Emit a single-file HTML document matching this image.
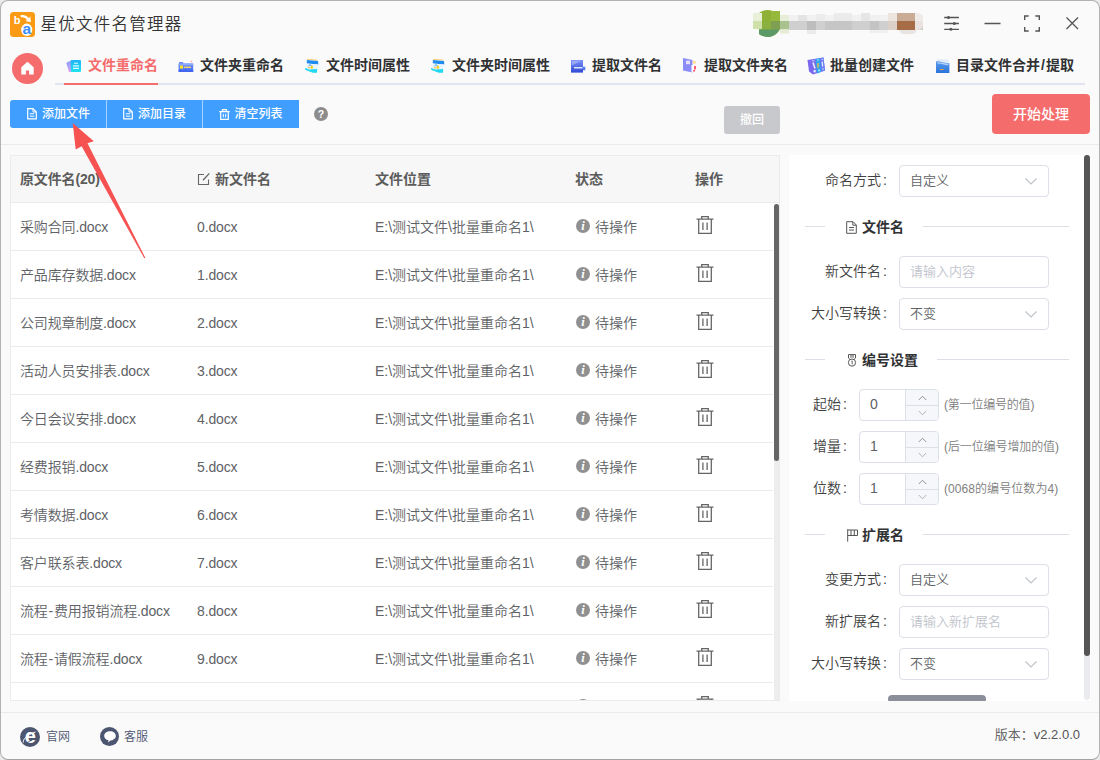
<!DOCTYPE html>
<html lang="zh-CN">
<head>
<meta charset="utf-8">
<title>星优文件名管理器</title>
<style>
*{box-sizing:border-box;margin:0;padding:0}
html,body{width:1100px;height:760px;overflow:hidden;background:#ebebeb}
body{font-family:"Liberation Sans","Noto Sans CJK SC",sans-serif;font-weight:350;font-size:14px;color:#606266;position:relative}
.abs{position:absolute}
#win{position:absolute;left:0;top:0;width:1100px;height:760px;background:#fafafa;border:1px solid #b2b2b2;border-bottom-color:#a2a2a2;border-radius:8px;overflow:hidden}
/* title */
#logo{left:9px;top:11px;width:25px;height:25px}
#title{left:39.500px;top:10px;font-size:16.500px;letter-spacing:1.250px;line-height:26px;color:#333;white-space:nowrap}
.wi{position:absolute;top:12px;width:20px;height:20px}
/* tabs */
#home{left:11px;top:52px;width:31px;height:31px;border-radius:50%;background:#f56c6c}
#tabline{left:54px;top:82px;width:1030px;height:2px;background:#e2e4f0}
#tabact{left:63px;top:82px;width:94px;height:2px;background:#f56c6c}
.tab{position:absolute;top:54px;height:20px;line-height:20px;font-size:14px;font-weight:bold;color:#303133;white-space:nowrap}
.tab.on{color:#f56c6c}
.ticon{position:absolute;top:56px;width:16px;height:16px}
/* toolbar */
#bgrp{left:9px;top:99px;width:289px;height:28px;border-radius:3px 0 0 3px;background:#409eff;overflow:hidden}
.bt{position:absolute;top:0;height:28px;line-height:28px;color:#fff;font-size:12px;font-weight:500;white-space:nowrap}
.bsep{position:absolute;top:0;width:1px;height:28px;background:rgba(255,255,255,.55)}
#undo{left:723px;top:105px;width:56px;height:28px;border-radius:3px;background:#c8c9cc;color:#fff;font-size:12px;font-weight:500;line-height:28px;text-align:center}
#start{left:991px;top:93px;width:98px;height:40px;border-radius:4px;background:#f56c6c;color:#fff;font-size:14px;font-weight:500;line-height:40px;text-align:center}
#hline1{left:0;top:143px;width:1098px;height:1px;background:#ebebeb}
/* table */
#tbl{left:9px;top:154px;width:770px;height:546px;background:#fff;border:1px solid #ebebeb;overflow:hidden}
#thead{left:0;top:0;width:768px;height:47px;background:#f7f7f7;border-bottom:1px solid #ebebeb}
.th{position:absolute;top:13px;line-height:20px;font-weight:bold;color:#5c5c5c;font-size:14px;white-space:nowrap}
.row{position:absolute;left:0;width:762px;height:48px;border-bottom:1px solid #ebebeb}
.td{position:absolute;top:14px;line-height:20px;font-size:14px;color:#606266;white-space:nowrap;font-weight:350}
.c1,.c2{letter-spacing:-.15px}
.c1{left:9px}.c2{left:186px}.c3{left:364px}.c4{left:564px}.c5{left:684px}
.info{position:absolute;left:565px;top:16.300px;width:14px;height:14px}
.st{left:584px}
.trash{position:absolute;left:685px;top:12px;width:18px;height:20px}
#tsbtrack{left:763px;top:48px;width:5px;height:498px;background:#ededed}
#tsb{left:763px;top:48px;width:5px;height:257px;background:#666;border-radius:3px}
/* right panel */
#rp{left:788px;top:154px;width:302px;height:546px;background:#fff;overflow:hidden}
.lb{position:absolute;width:100px;text-align:right;line-height:20px;font-size:14px;color:#404040;white-space:nowrap}
.lb i{font-style:normal;margin-left:2px}
.sel,.inp{position:absolute;height:32px;border:1px solid #dcdfe6;border-radius:4px;background:#fff;line-height:30px;font-size:13px;padding-left:10px;color:#606266;white-space:nowrap}
.inp{color:#c0c4cc}
.chev{position:absolute;right:10px;top:9px;width:14px;height:12px}
.dv{position:absolute;left:16px;width:264px;height:1px;background:#dcdfe6}
.dvt{position:absolute;top:-9px;height:20px;line-height:20px;background:#fff;font-weight:bold;color:#303133;font-size:14px;white-space:nowrap}
.num{position:absolute;left:70px;width:80px;height:32px;border:1px solid #dcdfe6;border-radius:4px;background:#fff;overflow:hidden}
.num .v{position:absolute;left:10px;top:0;line-height:29px;font-size:14px;color:#606266}
.num .sp{position:absolute;right:0;top:0;width:33px;height:30px;background:#f5f7fa;border-left:1px solid #dcdfe6}
.num .sp i{position:absolute;left:0;top:15px;width:32px;height:1px;background:#dcdfe6}
.hint{position:absolute;left:155px;line-height:20px;font-size:12px;color:#808080;white-space:nowrap;letter-spacing:-.2px}
#rsb{left:295px;top:0;width:6px;height:501px;background:#555;border-radius:3px}
#rsbtrack{left:295px;top:0;width:6px;height:545px;background:#e9ebee;border-radius:3px}
#hsb{left:99px;top:540px;width:98px;height:8px;background:#8b8f99;border-radius:4px}
/* footer */
#hline2{left:0;top:711px;width:1098px;height:1px;background:#ebebeb}
.ft{position:absolute;top:725.500px;line-height:20px;font-size:12px;color:#4d5670;white-space:nowrap}
.fic{overflow:hidden;position:absolute;top:725.500px;width:20px;height:20px;border-radius:50%;background:#4d5670}
#ver{right:19px;top:724px;line-height:20px;font-size:13px;color:#555;white-space:nowrap}
</style>
</head>
<body>
<div id="win">
<svg id="logo" class="abs" viewBox="0 0 25 25"><rect width="25" height="25" rx="3.500" fill="#fb9a14"/><path d="M10.400 3.300c3.600-.9 7 .5 8.600 3.200l1.300-2.500.6 6.300-5.600-1.300 1.800-1.100c-1.400-2-3.800-3-6.200-2.700z" fill="#fff"/><ellipse cx="16.700" cy="17.800" rx="5.600" ry="6.200" fill="#fff"/><text x="3.800" y="11.700" font-family="Liberation Sans, sans-serif" font-weight="bold" font-size="11" fill="#fff">b</text><text x="12.400" y="22.200" font-family="Liberation Sans, sans-serif" font-weight="bold" font-size="15.500" fill="#3b8ef5">a</text></svg>
<div id="title" class="abs">星优文件名管理器</div>
<div id="mosaic" class="abs" style="left:750px;top:11px;width:170px;height:24px">
<svg width="170" height="24" viewBox="0 0 170 24" style="overflow:visible">
<clipPath id="cpg"><rect x="8" y="-3" width="21" height="30"/></clipPath>
<g clip-path="url(#cpg)"><circle cx="16.500" cy="11.500" r="13.500" fill="#8fb236"/><rect x="20" y="-1" width="9" height="10" fill="#96b83c"/><rect x="11" y="9" width="9" height="9" fill="#8ab040"/><rect x="20" y="9" width="9" height="8.500" fill="#7f9f52"/><path d="M4 17.500h25v9H4z" fill="#5b9a66" clip-path="url(#cpc)"/></g>
<clipPath id="cpc"><circle cx="16.500" cy="11.500" r="13.500"/></clipPath>
<rect x="2" y="1" width="9" height="8" fill="#e8f0d8"/><rect x="2" y="9" width="9" height="8" fill="#cfe0a8"/>
<rect x="29" y="3" width="9" height="6" fill="#e6eed8"/><rect x="29" y="9" width="9" height="8.500" fill="#a9c18c"/><rect x="29" y="17.500" width="9" height="4" fill="#e4ecd4"/>
<g transform="translate(2 0)"><rect x="36" y="9" width="134" height="9" fill="#cfcfcf"/>
<rect x="36" y="3" width="100" height="6" fill="#f1f1f1"/>
<rect x="45" y="3" width="9" height="6" fill="#e4e4e4"/><rect x="63" y="2" width="9" height="7" fill="#ececec"/><rect x="81" y="1" width="18" height="8" fill="#ebebeb"/><rect x="108" y="1" width="9" height="8" fill="#e6e6e6"/>
<rect x="54" y="9" width="9" height="9" fill="#bdbdbd"/><rect x="72" y="9" width="27" height="9" fill="#c6c6c6"/><rect x="117" y="9" width="9" height="9" fill="#c4c4c4"/>
<rect x="54" y="18" width="9" height="4" fill="#ebebeb"/><rect x="117" y="18" width="18" height="3" fill="#f0f0f0"/>
<rect x="135" y="1" width="9" height="8" fill="#ece4de"/><rect x="135" y="9" width="9" height="9" fill="#dccfc6"/>
<rect x="144" y="1" width="18" height="8" fill="#c9ab96"/><rect x="144" y="9" width="18" height="9" fill="#a66c46"/>
<path d="M162 1h3a5 5 0 0 1 5 5v3h-8z" fill="#f0ebe8"/><path d="M162 9h8v4a5 5 0 0 1-5 5h-3z" fill="#e9e2de"/>
<path d="M146 18h18a6 6 0 0 1-6 4h-8a6 6 0 0 1-4-4z" fill="#e8e4e2"/>
</g></svg></div>
<svg class="wi" style="left:940px" viewBox="0 0 20 20" fill="none" stroke="#555" stroke-width="1.300"><path d="M3.200 4.500h14.700M3.200 10.500h14.700M3.200 16.300h14.700"/><g fill="#555" stroke="none"><circle cx="7.500" cy="4.500" r="1.500"/><circle cx="13.300" cy="10.500" r="1.500"/><circle cx="9.900" cy="16.300" r="1.500"/></g></svg>
<svg class="wi" style="left:981px" viewBox="0 0 20 20" fill="none" stroke="#555" stroke-width="1.300"><path d="M2.500 10.500h16"/></svg>
<svg class="wi" style="left:1021px" viewBox="0 0 20 20" fill="none" stroke="#555" stroke-width="1.400"><path d="M2.700 7V3h4M13.300 3h4v4M17.300 14v4h-4M6.700 18h-4v-4"/></svg>
<svg class="wi" style="left:1061px" viewBox="0 0 20 20" fill="none" stroke="#555" stroke-width="1.300"><path d="M4.500 4.500l11.500 11.500M16 4.500L4.500 16"/></svg>

<div id="home" class="abs"><svg width="31" height="31" viewBox="-0.5 -0.5 31 31"><path d="M15 8.300l-6.200 5.500v7.200h4.600v-4h3.200v4h4.600v-7.200z" fill="#fff"/></svg></div>
<div id="tabline" class="abs"></div><div id="tabact" class="abs"></div>
<svg class="abs" style="left:-1px;top:-1px" width="1100" height="90" viewBox="0 0 1100 90">
<defs><linearGradient id="g1" x1="0" y1="0" x2="0" y2="1"><stop offset="0" stop-color="#85a2f8"/><stop offset="1" stop-color="#dca0f5"/></linearGradient>
<linearGradient id="g2" x1="0" y1="0" x2="0" y2="1"><stop offset="0" stop-color="#1fb4f5"/><stop offset="1" stop-color="#20e4f0"/></linearGradient>
<linearGradient id="g5" x1="0" y1="0" x2="0" y2="1"><stop offset="0" stop-color="#7c93f8"/><stop offset="1" stop-color="#3048d4"/></linearGradient>
<linearGradient id="g8" x1="0" y1="0" x2="0" y2="1"><stop offset="0" stop-color="#5a9cf0"/><stop offset="1" stop-color="#2a74d8"/></linearGradient></defs>
<path d="M66.200 62.800l4.800-2.300v11.500h-2z" fill="url(#g1)"/><rect x="70.800" y="60" width="10.200" height="12" rx="1" fill="url(#g2)"/><path d="M74 63.300h4M73 65.900h6M73 68.400h6" stroke="#dffaff" stroke-width="1.100"/>
<rect x="179" y="62" width="4.200" height="3" fill="#6f8cff"/><rect x="178.600" y="63.500" width="14.600" height="8.500" rx=".6" fill="#5a7cf8"/><rect x="178.600" y="63.500" width="14.600" height="2" fill="#8fa8ff"/><rect x="178.600" y="69.600" width="14.600" height="2.400" fill="#4166ee"/><rect x="180" y="65.600" width="3" height="3" fill="#ffe81a"/><rect x="184" y="66.600" width="7" height="1.300" fill="#ffe060"/><circle cx="191.500" cy="61.500" r=".8" fill="#ffa090"/>
<g transform="translate(0 0)"><path d="M307 59.300l10.500.8" stroke="#ffc86a" stroke-width=".9"/><path d="M306.800 60l11.200 1 .3 3.600-11.500-1.100z" fill="#1f8df0"/><path d="M306.600 63.400l11.200 1v4.800h-11.200z" fill="#eaf4ff"/><path d="M308.500 65.800c1-1.300 2.600-1 3 .2" stroke="#2f9cf0" stroke-width="1" fill="none"/><ellipse cx="311.800" cy="67.300" rx="1.200" ry="1.700" fill="#f2cf1e"/><rect x="308" y="67" width="2" height="1.200" fill="#f5c24a"/><path d="M304.800 67.800l4.400 1.700 8-.5-.2 3.800h-4.200l-7.300-2.800z" fill="#22d8f0"/></g><g transform="translate(126 0)"><path d="M307 59.300l10.500.8" stroke="#ffc86a" stroke-width=".9"/><path d="M306.800 60l11.200 1 .3 3.600-11.500-1.100z" fill="#1f8df0"/><path d="M306.600 63.400l11.200 1v4.800h-11.200z" fill="#eaf4ff"/><path d="M308.500 65.800c1-1.300 2.600-1 3 .2" stroke="#2f9cf0" stroke-width="1" fill="none"/><ellipse cx="311.800" cy="67.300" rx="1.200" ry="1.700" fill="#f2cf1e"/><rect x="308" y="67" width="2" height="1.200" fill="#f5c24a"/><path d="M304.800 67.800l4.400 1.700 8-.5-.2 3.800h-4.200l-7.300-2.800z" fill="#22d8f0"/></g>
<rect x="571" y="60" width="12" height="12.600" fill="url(#g5)"/><path d="M571.800 60.800h9.500l-9.500 4.800z" fill="#a4b0fb" opacity=".8"/><rect x="583" y="66.700" width="2.300" height="3.600" fill="#5a78f0"/><rect x="574" y="67" width="8.500" height="1.500" fill="#dbe4ff"/>
<path d="M683 58l9.500 2v12.500l-9.500-2z" fill="#8c8cf8"/><rect x="686" y="60.600" width="4" height="3.600" fill="#e2e2ff"/><rect x="691.500" y="65" width="2.800" height="7.300" fill="#fff"/><ellipse cx="694.300" cy="62.300" rx="1.800" ry="1.500" fill="#ffdc9a"/><rect x="694" y="66" width="2" height="3.500" fill="#ff5f6e"/><rect x="693" y="70" width="2" height="1.600" fill="#ff5f6e"/>
<path d="M807.500 60l16-2.500 1.500 13-12 4-4-3z" fill="#7b68ee"/><path d="M815.500 59l4.500-.8 1 13.800-4 1.500z" fill="#2fa8f0"/><path d="M820.500 58l3-.5 1.500 13-3.500 1.300z" fill="#6f7ef5"/><path d="M813 62.500l2 6" stroke="#e8f4ff" stroke-width="1.500"/><path d="M818 63v4.800" stroke="#f5c030" stroke-width="1.300"/><path d="M822.200 61.500l.4 5" stroke="#e0ecff" stroke-width="1.200"/><rect x="813.500" y="70" width="2.300" height="2.300" fill="#d0f0ff"/><rect x="818.200" y="69.500" width="1.800" height="1.800" fill="#a8dcff"/><rect x="822.300" y="68" width="1.600" height="1.800" fill="#98c4ff"/><path d="M812 60.800h2.500M817 60h2M821.500 59.300h1.800" stroke="#c8f0ff" stroke-width=".8"/>
<path d="M937.500 59l11 .5.500 7h-12z" fill="#e3ebf9"/><path d="M936 61.500c4-1.200 9 2.500 13.400 1.500v10h-13.400z" fill="url(#g8)"/><path d="M937.500 63c3.500-.8 7 1.800 10.800 1.500" stroke="#cfe0f8" stroke-width="1.300" fill="none" opacity=".8"/><rect x="940" y="69" width="3.700" height="1" fill="#e0a040"/>
</svg>
<div class="tab on" style="left:87px">文件重命名</div>
<div class="tab" style="left:199px">文件夹重命名</div>
<div class="tab" style="left:325px">文件时间属性</div>
<div class="tab" style="left:451px">文件夹时间属性</div>
<div class="tab" style="left:591px">提取文件名</div>
<div class="tab" style="left:703px">提取文件夹名</div>
<div class="tab" style="left:829px">批量创建文件</div>
<div class="tab" style="left:955px">目录文件合并<span style="margin:0 1px">/</span>提取</div>

<div id="bgrp" class="abs">
<svg class="abs" style="left:17px;top:8px" width="10" height="12" viewBox="0 0 10 12" fill="none" stroke="#fff" stroke-width="1.200"><path d="M.7.700h5.300l3.300 3.300v6.800H.7z"/><path d="M6 .7v3.300h3.300M2.800 5.800h4.400M2.800 8.200h4.400" stroke-width="1"/></svg>
<div class="bt" style="left:32px">添加文件</div><div class="bsep" style="left:96px"></div>
<svg class="abs" style="left:113px;top:8px" width="10" height="12" viewBox="0 0 10 12" fill="none" stroke="#fff" stroke-width="1.200"><path d="M.7.700h5.300l3.300 3.300v6.800H.7z"/><path d="M6 .7v3.300h3.300M2.800 5.800h4.400M2.800 8.200h4.400" stroke-width="1"/></svg>
<div class="bt" style="left:128px">添加目录</div><div class="bsep" style="left:192px"></div>
<svg class="abs" style="left:208.500px;top:8.500px" width="11" height="11" viewBox="0 0 11 11" fill="none" stroke="#fff" stroke-width="1.200"><path d="M.3 2.600h10.400M3.500 2.400V.7h4v1.700M1.700 2.800v7.500h7.600V2.800"/><path d="M4.300 4.800v3.600M6.700 4.800v3.600" stroke-width="1"/></svg>
<div class="bt" style="left:224.500px">清空列表</div>
</div>
<svg class="abs" style="left:313px;top:106px" width="14" height="14" viewBox="0 0 14 14"><circle cx="7" cy="7" r="7" fill="#8c8c8c"/><text x="7" y="10.800" text-anchor="middle" font-family="Liberation Sans, sans-serif" font-weight="bold" font-size="10.500" fill="#fff">?</text></svg>
<div id="undo" class="abs">撤回</div>
<div id="start" class="abs">开始处理</div>
<div id="hline1" class="abs"></div>

<div id="tbl" class="abs">
<div id="thead" class="abs">
<div class="th c1">原文件名(20)</div>
<svg class="abs" style="left:186px;top:16px" width="14" height="14" viewBox="0 0 14 14" fill="none" stroke="#666" stroke-width="1.100"><path d="M11.500 7.500v5h-10v-10h5.500"/><path d="M6 8.200l6.300-6.800" stroke-width="1.300"/></svg>
<div class="th" style="left:204px">新文件名</div>
<div class="th c3">文件位置</div>
<div class="th c4">状态</div>
<div class="th c5">操作</div>
</div>
<div class="row" style="top:47px"><div class="td c1">采购合同.docx</div><div class="td c2">0.docx</div><div class="td c3">E:\测试文件\批量重命名1\</div><svg class="info" viewBox="0 0 14 14"><circle cx="7" cy="7" r="7" fill="#909090"/><text x="7" y="11" text-anchor="middle" font-family="Liberation Serif, serif" font-style="italic" font-weight="bold" font-size="12.500" fill="#fff">i</text></svg><div class="td st">待操作</div><svg class="trash" viewBox="0 0 18 20" fill="none" stroke="#666" stroke-width="1.300"><path d="M.5 4.200h17M5.700 4V1.700h6.600V4M2.700 4.500v13.800h12.600V4.500"/><path d="M6.900 7.500v7.500M11.100 7.500v7.500"/></svg></div>
<div class="row" style="top:95px"><div class="td c1">产品库存数据.docx</div><div class="td c2">1.docx</div><div class="td c3">E:\测试文件\批量重命名1\</div><svg class="info" viewBox="0 0 14 14"><circle cx="7" cy="7" r="7" fill="#909090"/><text x="7" y="11" text-anchor="middle" font-family="Liberation Serif, serif" font-style="italic" font-weight="bold" font-size="12.500" fill="#fff">i</text></svg><div class="td st">待操作</div><svg class="trash" viewBox="0 0 18 20" fill="none" stroke="#666" stroke-width="1.300"><path d="M.5 4.200h17M5.700 4V1.700h6.600V4M2.700 4.500v13.800h12.600V4.500"/><path d="M6.900 7.500v7.500M11.100 7.500v7.500"/></svg></div>
<div class="row" style="top:143px"><div class="td c1">公司规章制度.docx</div><div class="td c2">2.docx</div><div class="td c3">E:\测试文件\批量重命名1\</div><svg class="info" viewBox="0 0 14 14"><circle cx="7" cy="7" r="7" fill="#909090"/><text x="7" y="11" text-anchor="middle" font-family="Liberation Serif, serif" font-style="italic" font-weight="bold" font-size="12.500" fill="#fff">i</text></svg><div class="td st">待操作</div><svg class="trash" viewBox="0 0 18 20" fill="none" stroke="#666" stroke-width="1.300"><path d="M.5 4.200h17M5.700 4V1.700h6.600V4M2.700 4.500v13.800h12.600V4.500"/><path d="M6.900 7.500v7.500M11.100 7.500v7.500"/></svg></div>
<div class="row" style="top:191px"><div class="td c1">活动人员安排表.docx</div><div class="td c2">3.docx</div><div class="td c3">E:\测试文件\批量重命名1\</div><svg class="info" viewBox="0 0 14 14"><circle cx="7" cy="7" r="7" fill="#909090"/><text x="7" y="11" text-anchor="middle" font-family="Liberation Serif, serif" font-style="italic" font-weight="bold" font-size="12.500" fill="#fff">i</text></svg><div class="td st">待操作</div><svg class="trash" viewBox="0 0 18 20" fill="none" stroke="#666" stroke-width="1.300"><path d="M.5 4.200h17M5.700 4V1.700h6.600V4M2.700 4.500v13.800h12.600V4.500"/><path d="M6.900 7.500v7.500M11.100 7.500v7.500"/></svg></div>
<div class="row" style="top:239px"><div class="td c1">今日会议安排.docx</div><div class="td c2">4.docx</div><div class="td c3">E:\测试文件\批量重命名1\</div><svg class="info" viewBox="0 0 14 14"><circle cx="7" cy="7" r="7" fill="#909090"/><text x="7" y="11" text-anchor="middle" font-family="Liberation Serif, serif" font-style="italic" font-weight="bold" font-size="12.500" fill="#fff">i</text></svg><div class="td st">待操作</div><svg class="trash" viewBox="0 0 18 20" fill="none" stroke="#666" stroke-width="1.300"><path d="M.5 4.200h17M5.700 4V1.700h6.600V4M2.700 4.500v13.800h12.600V4.500"/><path d="M6.900 7.500v7.500M11.100 7.500v7.500"/></svg></div>
<div class="row" style="top:287px"><div class="td c1">经费报销.docx</div><div class="td c2">5.docx</div><div class="td c3">E:\测试文件\批量重命名1\</div><svg class="info" viewBox="0 0 14 14"><circle cx="7" cy="7" r="7" fill="#909090"/><text x="7" y="11" text-anchor="middle" font-family="Liberation Serif, serif" font-style="italic" font-weight="bold" font-size="12.500" fill="#fff">i</text></svg><div class="td st">待操作</div><svg class="trash" viewBox="0 0 18 20" fill="none" stroke="#666" stroke-width="1.300"><path d="M.5 4.200h17M5.700 4V1.700h6.600V4M2.700 4.500v13.800h12.600V4.500"/><path d="M6.900 7.500v7.500M11.100 7.500v7.500"/></svg></div>
<div class="row" style="top:335px"><div class="td c1">考情数据.docx</div><div class="td c2">6.docx</div><div class="td c3">E:\测试文件\批量重命名1\</div><svg class="info" viewBox="0 0 14 14"><circle cx="7" cy="7" r="7" fill="#909090"/><text x="7" y="11" text-anchor="middle" font-family="Liberation Serif, serif" font-style="italic" font-weight="bold" font-size="12.500" fill="#fff">i</text></svg><div class="td st">待操作</div><svg class="trash" viewBox="0 0 18 20" fill="none" stroke="#666" stroke-width="1.300"><path d="M.5 4.200h17M5.700 4V1.700h6.600V4M2.700 4.500v13.800h12.600V4.500"/><path d="M6.900 7.500v7.500M11.100 7.500v7.500"/></svg></div>
<div class="row" style="top:383px"><div class="td c1">客户联系表.docx</div><div class="td c2">7.docx</div><div class="td c3">E:\测试文件\批量重命名1\</div><svg class="info" viewBox="0 0 14 14"><circle cx="7" cy="7" r="7" fill="#909090"/><text x="7" y="11" text-anchor="middle" font-family="Liberation Serif, serif" font-style="italic" font-weight="bold" font-size="12.500" fill="#fff">i</text></svg><div class="td st">待操作</div><svg class="trash" viewBox="0 0 18 20" fill="none" stroke="#666" stroke-width="1.300"><path d="M.5 4.200h17M5.700 4V1.700h6.600V4M2.700 4.500v13.800h12.600V4.500"/><path d="M6.900 7.500v7.500M11.100 7.500v7.500"/></svg></div>
<div class="row" style="top:431px"><div class="td c1">流程<span style="margin:0 .9px">-</span>费用报销流程.docx</div><div class="td c2">8.docx</div><div class="td c3">E:\测试文件\批量重命名1\</div><svg class="info" viewBox="0 0 14 14"><circle cx="7" cy="7" r="7" fill="#909090"/><text x="7" y="11" text-anchor="middle" font-family="Liberation Serif, serif" font-style="italic" font-weight="bold" font-size="12.500" fill="#fff">i</text></svg><div class="td st">待操作</div><svg class="trash" viewBox="0 0 18 20" fill="none" stroke="#666" stroke-width="1.300"><path d="M.5 4.200h17M5.700 4V1.700h6.600V4M2.700 4.500v13.800h12.600V4.500"/><path d="M6.900 7.500v7.500M11.100 7.500v7.500"/></svg></div>
<div class="row" style="top:479px"><div class="td c1">流程<span style="margin:0 .9px">-</span>请假流程.docx</div><div class="td c2">9.docx</div><div class="td c3">E:\测试文件\批量重命名1\</div><svg class="info" viewBox="0 0 14 14"><circle cx="7" cy="7" r="7" fill="#909090"/><text x="7" y="11" text-anchor="middle" font-family="Liberation Serif, serif" font-style="italic" font-weight="bold" font-size="12.500" fill="#fff">i</text></svg><div class="td st">待操作</div><svg class="trash" viewBox="0 0 18 20" fill="none" stroke="#666" stroke-width="1.300"><path d="M.5 4.200h17M5.700 4V1.700h6.600V4M2.700 4.500v13.800h12.600V4.500"/><path d="M6.900 7.500v7.500M11.100 7.500v7.500"/></svg></div>
<div class="row" style="top:527px"><div class="td c1">流程<span style="margin:0 .9px">-</span>入职流程.docx</div><div class="td c2">10.docx</div><div class="td c3">E:\测试文件\批量重命名1\</div><svg class="info" viewBox="0 0 14 14"><circle cx="7" cy="7" r="7" fill="#909090"/><text x="7" y="11" text-anchor="middle" font-family="Liberation Serif, serif" font-style="italic" font-weight="bold" font-size="12.500" fill="#fff">i</text></svg><div class="td st">待操作</div><svg class="trash" viewBox="0 0 18 20" fill="none" stroke="#666" stroke-width="1.300"><path d="M.5 4.200h17M5.700 4V1.700h6.600V4M2.700 4.500v13.800h12.600V4.500"/><path d="M6.900 7.500v7.500M11.100 7.500v7.500"/></svg></div>
<div id="tsbtrack" class="abs"></div><div id="tsb" class="abs"></div>
</div>
<div id="rp" class="abs">
<div class="lb" style="left:0;top:15px;width:98px">命名方式<i>:</i></div><div class="sel" style="left:110px;top:10px;width:150px">自定义<svg class="chev" viewBox="0 0 14 12" fill="none" stroke="#bfc3ca" stroke-width="1.200"><path d="M1.500 3.500l5.500 5.500 5.500-5.500"/></svg></div>
<div class="dv" style="top:71px"><div class="dvt" style="left:20px;width:98px;padding-left:37px"><svg class="abs" style="left:21px;top:4px" width="11" height="13" viewBox="0 0 11 13" fill="none" stroke="#555" stroke-width="1"><path d="M.7.700h6.300l3.300 3.300v8.300H.7z"/><path d="M6.800.800v3.400h3.400M3 6.500h5M3 9h5"/></svg>文件名</div></div>
<div class="lb" style="left:0;top:106px;width:98px">新文件名<i>:</i></div><div class="inp" style="left:110px;top:101px;width:150px">请输入内容</div>
<div class="lb" style="left:0;top:148px;width:98px">大小写转换<i>:</i></div><div class="sel" style="left:110px;top:143px;width:150px">不变<svg class="chev" viewBox="0 0 14 12" fill="none" stroke="#bfc3ca" stroke-width="1.200"><path d="M1.500 3.500l5.500 5.500 5.500-5.500"/></svg></div>
<div class="dv" style="top:204px"><div class="dvt" style="left:20px;width:112px;padding-left:37px"><svg class="abs" style="left:22px;top:4px" width="10" height="13" viewBox="0 0 10 13" fill="none" stroke="#555" stroke-width="1"><path d="M1.500.600h7v3.500l-1.500 1.300M1.500.600v3.500l1.500 1.300M4 .8v3M6 .8v3"/><circle cx="5" cy="8.600" r="3.600"/><path d="M4.500 7.300l.7-.4v3.500" stroke-width=".9"/></svg>编号设置</div></div>
<div class="lb" style="left:1px;top:239px;width:57px">起始<i>:</i></div><div class="num" style="top:234px"><span class="v">0</span><div class="sp"><i></i><svg class="abs" style="left:12px;top:5px" width="9" height="6" viewBox="0 0 9 6" fill="none" stroke="#909399" stroke-width="1"><path d="M.8 5l3.700-3.800 3.700 3.800"/></svg><svg class="abs" style="left:12px;top:20px" width="9" height="6" viewBox="0 0 9 6" fill="none" stroke="#b0b3b9" stroke-width="1"><path d="M.8 1l3.700 3.800 3.700-3.800"/></svg></div></div><div class="hint" style="top:240px">(第一位编号的值)</div>
<div class="lb" style="left:1px;top:281px;width:57px">增量<i>:</i></div><div class="num" style="top:276px"><span class="v">1</span><div class="sp"><i></i><svg class="abs" style="left:12px;top:5px" width="9" height="6" viewBox="0 0 9 6" fill="none" stroke="#909399" stroke-width="1"><path d="M.8 5l3.700-3.800 3.700 3.800"/></svg><svg class="abs" style="left:12px;top:20px" width="9" height="6" viewBox="0 0 9 6" fill="none" stroke="#b0b3b9" stroke-width="1"><path d="M.8 1l3.700 3.800 3.700-3.800"/></svg></div></div><div class="hint" style="top:282px;letter-spacing:-.1px">(后一位编号增加的值)</div>
<div class="lb" style="left:1px;top:323px;width:57px">位数<i>:</i></div><div class="num" style="top:318px"><span class="v">1</span><div class="sp"><i></i><svg class="abs" style="left:12px;top:5px" width="9" height="6" viewBox="0 0 9 6" fill="none" stroke="#909399" stroke-width="1"><path d="M.8 5l3.700-3.800 3.700 3.800"/></svg><svg class="abs" style="left:12px;top:20px" width="9" height="6" viewBox="0 0 9 6" fill="none" stroke="#b0b3b9" stroke-width="1"><path d="M.8 1l3.700 3.800 3.700-3.800"/></svg></div></div><div class="hint" style="top:324px;letter-spacing:.07px">(0068的编号位数为4)</div>
<div class="dv" style="top:379px"><div class="dvt" style="left:20px;width:98px;padding-left:37px"><svg class="abs" style="left:22px;top:4px" width="11" height="13" viewBox="0 0 11 13" fill="none" stroke="#555" stroke-width="1"><path d="M.7.300v12.400M.7 1h9.800v5.500H.7M4 1v5.500M7.300 1v5.500"/></svg>扩展名</div></div>
<div class="lb" style="left:0;top:414px;width:98px">变更方式<i>:</i></div><div class="sel" style="left:110px;top:409px;width:150px">自定义<svg class="chev" viewBox="0 0 14 12" fill="none" stroke="#bfc3ca" stroke-width="1.200"><path d="M1.500 3.500l5.500 5.500 5.500-5.500"/></svg></div>
<div class="lb" style="left:0;top:456px;width:98px">新扩展名<i>:</i></div><div class="inp" style="left:110px;top:451px;width:150px">请输入新扩展名</div>
<div class="lb" style="left:0;top:498px;width:98px">大小写转换<i>:</i></div><div class="sel" style="left:110px;top:493px;width:150px">不变<svg class="chev" viewBox="0 0 14 12" fill="none" stroke="#bfc3ca" stroke-width="1.200"><path d="M1.500 3.500l5.500 5.500 5.500-5.500"/></svg></div>
<div id="hsb" class="abs"></div>
<div id="rsbtrack" class="abs"></div><div id="rsb" class="abs"></div>
</div>
<div id="hline2" class="abs"></div>
<div class="fic" style="left:19px"><svg width="20" height="20" viewBox="0 0 20 20"><text x="10.300" y="16" text-anchor="middle" font-family="Liberation Sans, sans-serif" font-weight="bold" font-size="20" fill="#fff">e</text><path d="M3.500 15.500c-1.500-2.500 4-8 12-10.500" stroke="#fff" stroke-width="1" fill="none"/><path d="M4.200 15.800c2 .5 5-1 7-2.500" stroke="#4d5670" stroke-width=".8" fill="none"/></svg></div>
<div class="ft" style="left:45px">官网</div>
<div class="fic" style="left:98.500px;width:19.500px;height:19.500px"><svg width="20" height="20" viewBox="0 0 20 20"><path d="M10 4.200c3.300 0 5.800 2.100 5.800 4.700 0 1.300-.6 2.400-1.600 3.200l-.9-.3.200 1c-.9.500-1.900.8-3.100.8l-2.200 1.900.2-2.300c-2.400-.6-4.200-2.300-4.200-4.300 0-2.600 2.600-4.700 5.800-4.700z" fill="#fff"/></svg></div>
<div class="ft" style="left:123px">客服</div>
<div id="ver" class="abs">版本：v2.2.0.0</div>
</div>
<svg class="abs" style="left:60px;top:120px" width="100" height="150" viewBox="0 0 100 150"><path d="M12.700 3L33.800 21.200L27.500 23.300L85.300 137.800L84.300 138.300L21.600 26.200L15.700 29.600z" fill="#f75252"/></svg>
</body>
</html>
